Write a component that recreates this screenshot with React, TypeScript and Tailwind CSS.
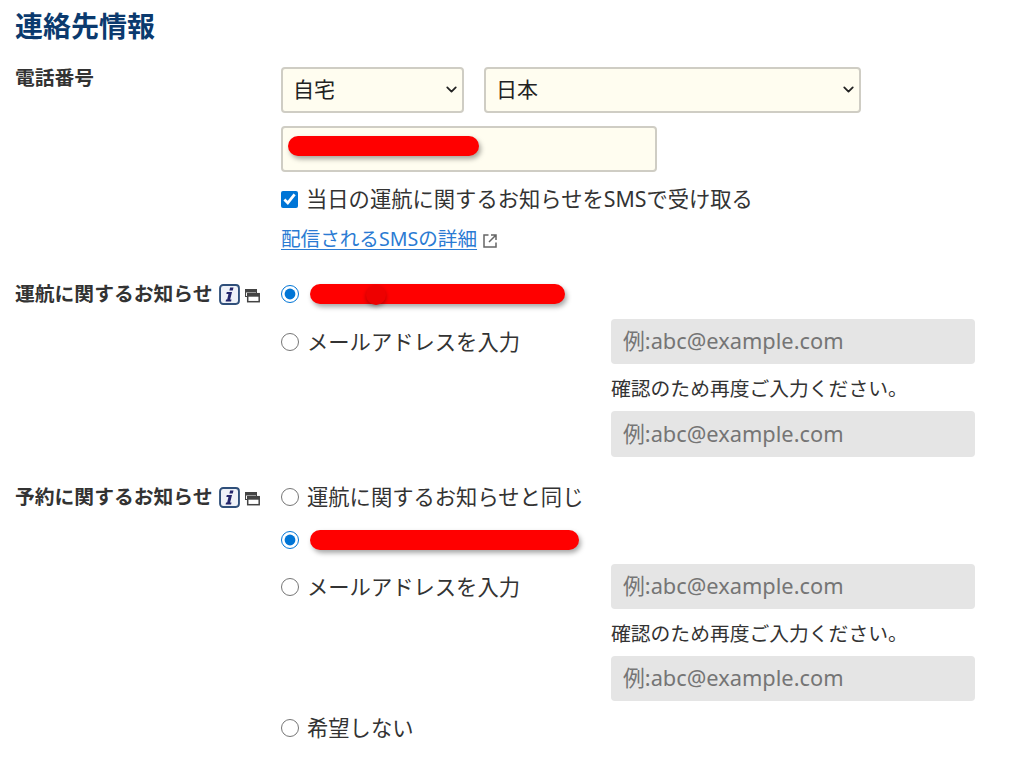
import React from "react";
import { ChevronDown } from "lucide-react";

const font = "font-['Noto_Sans','Noto_Sans_CJK_JP',sans-serif]";

function InfoIcons() {
  return (
    <span className="ml-[7px] flex items-center gap-[5px]">
      <svg width="21" height="21" viewBox="0 0 20 20" aria-hidden="true">
        <rect x="1" y="1" width="18" height="18" rx="3" fill="#eef1f8" stroke="#2f4f7a" strokeWidth="1.800" />
        <path d="M10.600 3.400h3.200l-.7 2.900h-3.200z" fill="#23256b" />
        <path d="M7.400 7.700h5l-1.800 7h1.300l-.4 1.900H6.300l.4-1.900h1.100l1.200-5.100H7z" fill="#23256b" />
      </svg>
      <svg width="15" height="14" viewBox="0 0 15 14" aria-hidden="true" className="mt-[3px]">
        <rect x="0.500" y="0.500" width="11" height="7" fill="#fff" stroke="#444" />
        <rect x="0.500" y="0.500" width="11" height="3" fill="#444" />
        <rect x="2.700" y="4.700" width="11.500" height="8" fill="#fff" stroke="#444" strokeWidth="1.500" />
        <rect x="2.700" y="4.700" width="11.500" height="3" fill="#444" />
      </svg>
    </span>
  );
}

function Radio({ checked }: { checked?: boolean }) {
  return (
    <input
      type="radio"
      defaultChecked={checked}
      className="m-0 h-[18px] w-[18px] shrink-0 accent-[#0075d6]"
    />
  );
}

function Scribble({ width }: { width: string }) {
  return <span className={`ml-[3px] block h-[20px] rounded-full bg-[#ff0000] shadow-[2px_3px_5px_rgba(0,0,0,0.35)] ${width}`} />;
}

function MailInput({ height }: { height: string }) {
  return (
    <input
      disabled
      placeholder="例:abc@example.com"
      className={`w-[364px] rounded-[4px] bg-[#e5e5e5] px-[12px] pb-[2px] text-[21.800px] placeholder:text-[#757575] ${height}`}
    />
  );
}

function MailEntry({ lastHeight }: { lastHeight: string }) {
  return (
    <div className="flex items-start">
      <label className="flex h-[45px] w-[330px] items-center gap-[8px] pt-[1px]">
        <Radio />
        <span className="text-[21.300px]">メールアドレスを入力</span>
      </label>
      <div className="flex flex-col">
        <MailInput height="h-[45px]" />
        <p className="mt-[11px] mb-[8px] text-[19.800px] leading-[28px]">確認のため再度ご入力ください。</p>
        <MailInput height={lastHeight} />
      </div>
    </div>
  );
}

function Select({ label, width }: { label: string; width: string }) {
  return (
    <div className={`relative ${width}`}>
      <select className="h-[46px] w-full appearance-none rounded-[4px] border-2 border-[#cfcdc4] bg-[#fffdf0] px-[10px] text-[21px] text-[#222222]">
        <option>{label}</option>
      </select>
      <ChevronDown size={17} strokeWidth={2.500} className="pointer-events-none absolute right-[4px] top-[14px] text-[#222222]" />
    </div>
  );
}

export default function App() {
  return (
    <div className={`${font} min-h-[765px] w-[1024px] overflow-hidden bg-white pl-[15px] text-[#333333]`}>
      <h1 className="pt-[6px] text-[28px] font-bold leading-[40px] text-[#0b3a6e]">連絡先情報</h1>

      <section className="mt-[21px] flex">
        <h2 className="w-[266px] text-[19.800px] font-bold leading-[22px]">電話番号</h2>
        <div className="flex flex-col">
          <div className="flex gap-[20px]">
            <Select label="自宅" width="w-[183px]" />
            <Select label="日本" width="w-[377px]" />
          </div>
          <div className="mt-[13px] flex h-[46px] w-[376px] items-start rounded-[4px] border-2 border-[#cfcdc4] bg-[#fffdf0] pl-[2px] pt-[8px]">
            <Scribble width="w-[191px]" />
          </div>
          <label className="mt-[12px] flex h-[30px] items-center gap-[8px]">
            <input type="checkbox" defaultChecked className="m-0 h-[17px] w-[17px] accent-[#0075d6]" />
            <span className="text-[21.300px] leading-[30px]">当日の運航に関するお知らせをSMSで受け取る</span>
          </label>
          <div className="mt-[10px] flex items-center gap-[5px]">
            <a className="text-[19.600px] leading-[30px] text-[#2b7bd3] underline underline-offset-[3px]">配信されるSMSの詳細</a>
            <svg width="16" height="16" viewBox="0 0 16 16" fill="none" stroke="#666" strokeWidth="1.500" aria-hidden="true" className="mt-[3px]">
              <path d="M6.500 2H2v12h12V9.500" />
              <path d="M9 2h5v5M14 2L7 9" />
            </svg>
          </div>
        </div>
      </section>

      <section className="mt-[25px] flex">
        <h2 className="flex h-[30px] w-[266px] items-center whitespace-nowrap text-[19.800px] font-bold">
          運航に関するお知らせ
          <InfoIcons />
        </h2>
        <div className="flex flex-col">
          <label className="relative flex h-[30px] items-center gap-[8px]">
            <Radio checked />
            <Scribble width="w-[255px]" />
            <span className="absolute left-[85px] top-[6px] h-[20px] w-[20px] rounded-full bg-[#ee0000] shadow-[0_2px_4px_rgba(0,0,0,0.3)]" />
          </label>
          <div className="mt-[10px]">
            <MailEntry lastHeight="h-[46px]" />
          </div>
        </div>
      </section>

      <section className="mt-[25px] flex">
        <h2 className="flex h-[30px] w-[266px] items-center whitespace-nowrap text-[19.800px] font-bold">
          予約に関するお知らせ
          <InfoIcons />
        </h2>
        <div className="flex flex-col">
          <label className="flex h-[30px] items-center gap-[8px]">
            <Radio />
            <span className="text-[21.300px]">運航に関するお知らせと同じ</span>
          </label>
          <label className="mt-[13px] flex h-[30px] items-center gap-[8px]">
            <Radio checked />
            <Scribble width="w-[269px]" />
          </label>
          <div className="mt-[9px]">
            <MailEntry lastHeight="h-[45px]" />
          </div>
          <label className="mt-[12px] flex h-[30px] items-center gap-[8px]">
            <Radio />
            <span className="text-[21.300px]">希望しない</span>
          </label>
        </div>
      </section>
    </div>
  );
}
